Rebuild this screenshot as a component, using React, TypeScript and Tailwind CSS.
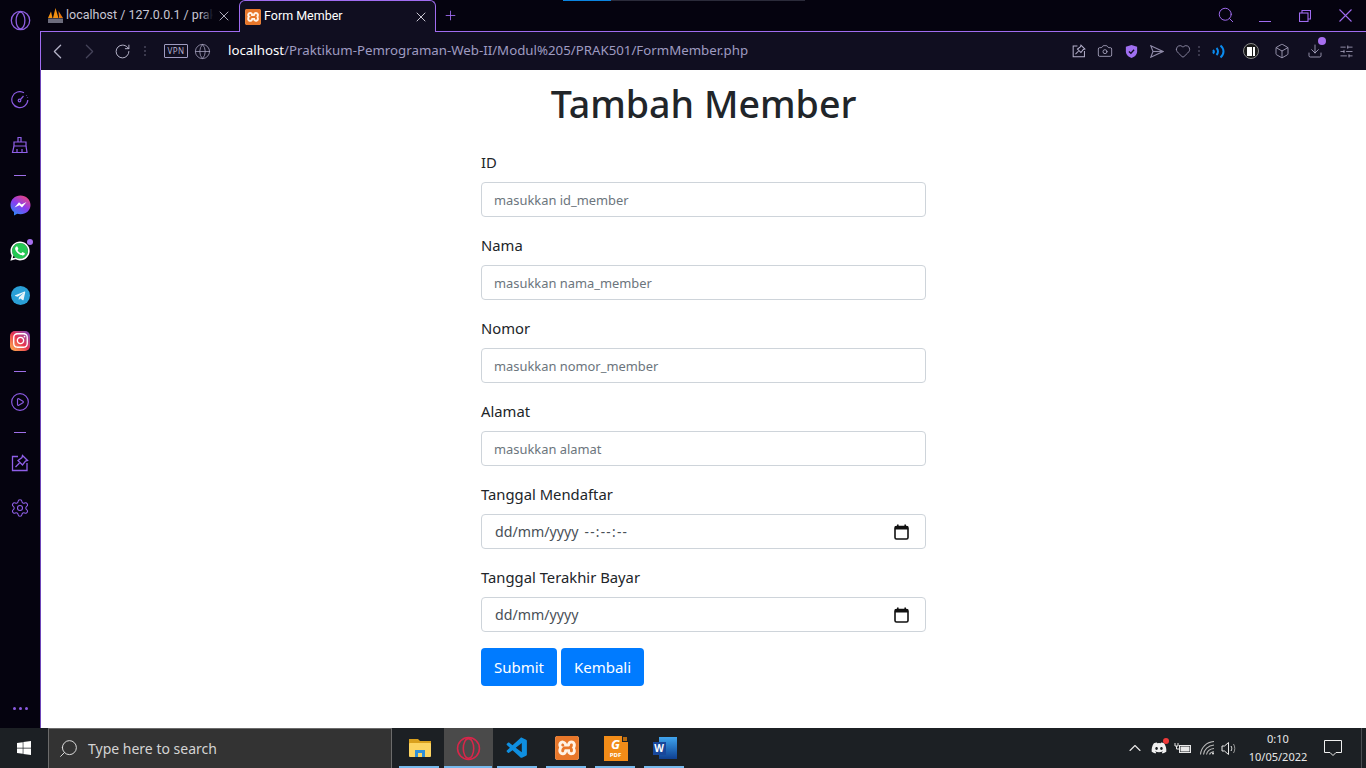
import type { ReactNode } from 'react'
import {
  ChevronLeft,
  ChevronRight,
  ChevronUp,
  RotateCw,
  Globe,
  CirclePlay,
  Settings,
  Search,
  X,
  Plus,
  Camera,
  Heart,
  Box,
  Download,
  SlidersHorizontal
} from 'lucide-react'
import { FaWhatsapp, FaTelegramPlane, FaInstagram, FaDiscord, FaWindows } from 'react-icons/fa'
import { SiXampp } from 'react-icons/si'
import { VscVscode } from 'react-icons/vsc'

const font = "font-['Noto_Sans','Open_Sans',sans-serif]"

const PinBox = ({ size, color }: { size: number; color: string }) => (
  <svg width={size} height={size} viewBox="0 0 18 18" fill="none" stroke={color} strokeWidth="1.3">
    <path d="M7 2.5H1.5V16.5H16V9" />
    <path d="M11.5 1.5L16.5 6.5L14.5 7L11.5 11L7 6.5L11 3.5Z" />
    <path d="M8.5 9L4.5 13" />
  </svg>
)

const OperaLogo = ({ size, color }: { size: number; color: string }) => (
  <svg width={size} height={size} viewBox="0 0 24 24" fill="none" stroke={color} strokeWidth="1.5">
    <circle cx="12" cy="12" r="10.5" />
    <ellipse cx="12" cy="12" rx="5" ry="9.5" />
  </svg>
)

const Dots = () => (
  <div className="flex flex-col gap-[2px]">
    <span className="w-[2px] h-[2px] bg-[#3a384c]" />
    <span className="w-[2px] h-[2px] bg-[#3a384c]" />
    <span className="w-[2px] h-[2px] bg-[#3a384c]" />
  </div>
)

const SideItem = ({ children }: { children: ReactNode }) => (
  <div className="h-[45px] flex items-center justify-center relative shrink-0">{children}</div>
)

const SideDivider = () => (
  <div className="h-[16px] flex items-center justify-center shrink-0">
    <div className="w-3 h-px bg-[#9f6fe8]" />
  </div>
)

const Sidebar = () => (
  <div className="w-[40px] shrink-0 bg-[#05030f] flex flex-col">
    <div className="h-[40px] pl-[1px] flex items-center justify-center shrink-0">
      <OperaLogo size={21} color="#8e5fe0" />
    </div>
    <div className="h-[37px] shrink-0" />
    <SideItem>
      <svg width="18" height="18" viewBox="0 0 18 18" fill="none" stroke="#8a5ae0" strokeWidth="1.2">
        <path d="M13 1.8A8 8 0 1 0 16.8 9" />
        <circle cx="8.5" cy="9.5" r="1.3" />
        <path d="M9.5 8.5L12.5 5" />
        <path d="M15.5 4.5V5M16.5 6.5V7" />
      </svg>
    </SideItem>
    <SideItem>
      <svg width="18" height="18" viewBox="0 0 18 18" fill="none" stroke="#8f5fe8" strokeWidth="1.2">
        <path d="M7 6V1.5H10V6" />
        <path d="M3 6H15V10H3Z" />
        <path d="M3 10L1.5 16.5H16L15 10" />
        <path d="M6 16V13M11 16V13" />
      </svg>
    </SideItem>
    <SideDivider />
    <SideItem>
      <svg width="21" height="21" viewBox="0 0 21 21">
        <defs>
          <linearGradient id="msgr" x1="0.8" y1="0" x2="0.2" y2="1">
            <stop offset="0" stopColor="#f0457a" />
            <stop offset="0.5" stopColor="#8a3cf0" />
            <stop offset="1" stopColor="#2a8cf8" />
          </linearGradient>
        </defs>
        <path d="M10.5 0.5C5 0.5 0.5 4.5 0.5 10C0.5 13 1.8 15.5 4 17V20.5L7.2 18.8C8.2 19.1 9.3 19.3 10.5 19.3C16 19.3 20.5 15.4 20.5 10C20.5 4.5 16 0.5 10.5 0.5Z" fill="url(#msgr)" />
        <path d="M4.5 12.5L9 7.2L11.5 9.5L16.5 7L12 12.5L9.5 10.2Z" fill="#ffffff" />
      </svg>
    </SideItem>
    <SideItem>
      <div className="w-[16px] h-[16px] rounded-full bg-[#25c853] flex items-center justify-center">
        <FaWhatsapp size={22} color="#ffffff" className="shrink-0" />
      </div>
      <div className="absolute top-[11px] right-[7px] w-[6px] h-[6px] rounded-full bg-[#a76ff0]" />
    </SideItem>
    <SideItem>
      <div className="w-[19px] h-[19px] rounded-full bg-[#2a9fd6] flex items-center justify-center">
        <FaTelegramPlane size={12} color="#e8f4fa" />
      </div>
    </SideItem>
    <SideItem>
      <div className="w-5 h-5 rounded-[5px] bg-gradient-to-tr from-[#fdb44b] via-[#e6304f] to-[#7a3cc0] flex items-center justify-center">
        <FaInstagram size={17} color="#ffffff" />
      </div>
    </SideItem>
    <SideDivider />
    <SideItem>
      <CirclePlay size={20} color="#8a5ae0" strokeWidth={1.4} />
    </SideItem>
    <SideDivider />
    <SideItem>
      <PinBox size={18} color="#8f5fe8" />
    </SideItem>
    <SideItem>
      <Settings size={20} color="#8f5fe8" strokeWidth={1.3} />
    </SideItem>
    <div className="mt-auto h-[21px] flex items-start justify-center gap-[3px]">
      <span className="w-[3px] h-[3px] rounded-full bg-[#8a5ae0]" />
      <span className="w-[3px] h-[3px] rounded-full bg-[#8a5ae0]" />
      <span className="w-[3px] h-[3px] rounded-full bg-[#8a5ae0]" />
    </div>
  </div>
)

const PmaIcon = () => (
  <svg width="17" height="17" viewBox="0 0 17 17" className="shrink-0">
    <path d="M1 11L4 4.5L5.5 11Z" fill="#f29111" />
    <path d="M6 11L8.5 1L11.5 11Z" fill="#f29111" />
    <path d="M12 11L11.5 4L16 11Z" fill="#e8770f" />
    <rect x="1" y="11.5" width="15" height="4.5" fill="#6c6c7c" />
  </svg>
)

// the Si glyph is a filled square with the logo cut out, so the light shows through it
const XamppIcon = ({ size }: { size: number }) => (
  <div className="bg-[#fff3e6] rounded-[3px] shrink-0" style={{ width: size, height: size }}>
    <SiXampp size={size} color="#e8772a" />
  </div>
)

const TabStrip = () => (
  <div className="h-[31px] flex items-stretch bg-[#05030f] relative shrink-0">
    <div className="absolute left-[523px] top-0 w-[48px] h-[1px] bg-[#0a84e0]" />
    <div className="absolute left-[571px] top-0 w-[194px] h-[1px] bg-[#2b2b3a]" />
    <div className="w-[199px] flex items-center pl-[7px] pr-[7px] shrink-0">
      <PmaIcon />
      <div className="ml-[2px] w-[147px] relative overflow-hidden">
        <span className="block whitespace-nowrap font-['Roboto',sans-serif] text-[12.5px] text-[#c8c6d4]">
          localhost / 127.0.0.1 / prak501
        </span>
        <div className="absolute right-0 top-0 bottom-0 w-[12px] bg-gradient-to-r from-transparent to-[#05030f]" />
      </div>
      <X size={16} color="#c8c6d4" className="ml-auto" strokeWidth={1.3} />
    </div>
    <div className="w-[197px] -mb-px z-10 flex items-center pl-[5px] pr-[6px] bg-[#100e20] border border-b-0 border-[#a06cf0] rounded-t-[6px] shrink-0">
      <XamppIcon size={16} />
      <span className="ml-[3px] font-['Roboto',sans-serif] text-[12.5px] text-white whitespace-nowrap">Form Member</span>
      <X size={16} color="#e8e6f0" className="ml-auto" strokeWidth={1.3} />
    </div>
    <div className="w-[28px] flex items-center justify-center">
      <Plus size={15} color="#a06cf0" strokeWidth={1.4} />
    </div>
    <div className="ml-auto flex items-center mr-[1px]">
      <div className="w-[38px] flex justify-center -mt-[2px]">
        <Search size={18} color="#a06cf0" strokeWidth={1.3} />
      </div>
      <div className="w-[40px] flex justify-center">
        <div className="w-3 h-px bg-[#a06cf0] mt-[11px]" />
      </div>
      <div className="w-[40px] flex justify-center">
        <svg width="12" height="12" viewBox="0 0 12 12" fill="none" stroke="#a06cf0" strokeWidth="1.1">
          <rect x="0.5" y="3" width="8.5" height="8.5" />
          <path d="M3 3V0.5H11.5V9H9" />
        </svg>
      </div>
      <div className="w-[40px] flex justify-center">
        <svg width="13" height="13" viewBox="0 0 13 13" fill="none" stroke="#a06cf0" strokeWidth="1.1">
          <path d="M0.5 0.5L12.5 12.5M12.5 0.5L0.5 12.5" />
        </svg>
      </div>
    </div>
  </div>
)

const BarSlot = ({ width, children }: { width: string; children: ReactNode }) => (
  <div className={`${width} flex items-center justify-center`}>{children}</div>
)

const AddressBar = () => (
  <div className="h-[39px] bg-[#100e20] border-t border-l border-[#a06cf0] flex items-center shrink-0">
    <ChevronLeft size={25} color="#b5b3c8" strokeWidth={1.2} className="ml-[4px]" />
    <ChevronRight size={25} color="#45435a" strokeWidth={1.2} className="ml-[7px]" />
    <RotateCw size={17} color="#b5b3c8" strokeWidth={1.4} className="ml-[12px]" />
    <div className="ml-[13px]">
      <Dots />
    </div>
    <div className="ml-[18px] w-[24px] h-[14px] border border-[#a09cc0] rounded-[1px] text-[8px] leading-[12px] tracking-[0.5px] text-center text-[#b5b1cc]">
      VPN
    </div>
    <Globe size={17} color="#a8a4c0" strokeWidth={1.1} className="ml-[6px]" />
    <div className="ml-[17px] -mt-[1px] text-[13.27px] whitespace-nowrap">
      <span className="text-white">localhost</span>
      <span className="text-[#9f9bc0]">/Praktikum-Pemrograman-Web-II/Modul%205/PRAK501/FormMember.php</span>
    </div>
    <div className="ml-auto mr-[4px] flex items-center">
      <BarSlot width="w-[26px]">
        <PinBox size={14} color="#b5b1cc" />
      </BarSlot>
      <BarSlot width="w-[26px]">
        <Camera size={16} color="#b5b1cc" strokeWidth={1.2} />
      </BarSlot>
      <BarSlot width="w-[26px]">
        <svg width="13" height="15" viewBox="0 0 15 16">
          <path d="M7.5 0.5L14 2.5V8C14 12 10.5 14.5 7.5 15.5C4.5 14.5 1 12 1 8V2.5Z" fill="#9f6ff0" />
          <path d="M4.5 8L6.8 10L10.5 6" fill="none" stroke="#100e20" strokeWidth="1.5" />
        </svg>
      </BarSlot>
      <BarSlot width="w-[26px]">
        <svg width="14" height="13" viewBox="0 0 14 13" fill="none" stroke="#8f8aa8" strokeWidth="1.1">
          <path d="M0.8 0.8L13 6.5L0.8 12.2L3 6.5Z" />
          <path d="M3 6.5H13" />
        </svg>
      </BarSlot>
      <BarSlot width="w-[26px]">
        <Heart size={16} color="#a09cb8" strokeWidth={1.2} />
      </BarSlot>
      <BarSlot width="w-[6px]">
        <Dots />
      </BarSlot>
      <BarSlot width="w-[34px]">
        <svg width="14" height="15" viewBox="0 0 14 14" fill="none" stroke="#0a8cf0" strokeWidth="2">
          <path d="M1 5.5C2 6.5 2 8 1 9" />
          <path d="M4.5 3.5C6.5 5.5 6.5 8.5 4.5 10.5" />
          <path d="M8.5 1C12.5 4.5 12.5 9.5 8.5 13" />
        </svg>
      </BarSlot>
      <BarSlot width="w-[30px]">
        <div className="w-4 h-4 rounded-full bg-[#1a1a1a] border border-[#8a8a8a] flex items-center justify-center">
          <span className="w-[5px] h-[9px] bg-white mr-[1px]" />
          <span className="w-[2px] h-[9px] bg-white" />
        </div>
      </BarSlot>
      <BarSlot width="w-[32px]">
        <Box size={16} color="#b5b1cc" strokeWidth={1.2} />
      </BarSlot>
      <BarSlot width="w-[32px]">
        <div className="relative ml-[1px]">
          <Download size={16} color="#b5b1cc" strokeWidth={1.2} />
          <span className="absolute -top-[6px] left-[11px] w-2 h-2 rounded-full bg-[#a76ff0]" />
        </div>
      </BarSlot>
      <BarSlot width="w-[32px]">
        <SlidersHorizontal size={15} color="#b5b1cc" strokeWidth={1.2} />
      </BarSlot>
    </div>
  </div>
)

const FieldLabel = ({ text }: { text: string }) => (
  <label className="block h-[24px] mb-[8px] leading-[24px] text-[14.8px] text-[#212529]">{text}</label>
)

const TextField = ({ label, placeholder }: { label: string; placeholder: string }) => (
  <div className="mb-[16px]">
    <FieldLabel text={label} />
    <input
      type="text"
      placeholder={placeholder}
      className="block w-full h-[35px] px-[12px] pt-[1px] text-[12.9px] bg-white border border-[#ced4da] rounded-[4px] outline-none placeholder:text-[#6c757d]"
    />
  </div>
)

const CalendarIcon = () => (
  <svg width="15" height="16" viewBox="0 0 15 16" fill="none">
    <rect x="1" y="2.5" width="13" height="12.5" rx="1.5" stroke="#111" strokeWidth="1.6" />
    <rect x="1" y="2.5" width="13" height="3" fill="#111" />
    <rect x="3" y="0.5" width="1.6" height="3" fill="#111" />
    <rect x="10.4" y="0.5" width="1.6" height="3" fill="#111" />
  </svg>
)

const DateField = ({ label, withTime }: { label: string; withTime?: boolean }) => (
  <div className="mb-[16px]">
    <FieldLabel text={label} />
    <div className="h-[35px] pl-[13px] pr-[16px] flex items-center justify-between bg-white border border-[#ced4da] rounded-[4px]">
      <div className="flex items-center pt-[1px] text-[#495057]">
        <span className="text-[14.2px]">dd/mm/yyyy</span>
        {withTime && <span className="ml-[6px] text-[13.5px] tracking-[1.3px]">--:--:--</span>}
      </div>
      <CalendarIcon />
    </div>
  </div>
)

const FormPage = () => (
  <div className="flex-1 bg-white border-l border-[#6d45b8] min-h-0 overflow-hidden">
    <h1 className="mt-[8px] mb-[20px] h-[52px] leading-[52px] text-center text-[37.6px] font-medium text-[#212529]">
      Tambah Member
    </h1>
    <form className="w-[445px] mx-auto">
      <TextField label="ID" placeholder="masukkan id_member" />
      <TextField label="Nama" placeholder="masukkan nama_member" />
      <TextField label="Nomor" placeholder="masukkan nomor_member" />
      <TextField label="Alamat" placeholder="masukkan alamat" />
      <DateField label="Tanggal Mendaftar" withTime />
      <DateField label="Tanggal Terakhir Bayar" />
      <div className="flex gap-[4px]">
        <button type="button" className="w-[76px] h-[38px] bg-[#007bff] text-white text-[15px] rounded-[4px]">
          Submit
        </button>
        <button type="button" className="w-[83px] h-[38px] bg-[#007bff] text-white text-[15px] rounded-[4px]">
          Kembali
        </button>
      </div>
    </form>
  </div>
)

const TaskSlot = ({ children, active }: { children: ReactNode; active?: boolean }) => (
  <div className={`w-[49px] h-full relative flex items-center justify-center ${active ? 'bg-[#4a4a4a]' : ''}`}>
    {children}
    <div className={`absolute bottom-0 h-[2px] bg-[#76b9ed] ${active ? 'left-0 right-[1px]' : 'left-[4px] right-[5px]'}`} />
  </div>
)

const Taskbar = () => (
  <div className="h-[40px] bg-[#1c2024] flex items-stretch shrink-0 text-white">
    <div className="w-[48px] flex items-center justify-center">
      <FaWindows size={16} color="#ffffff" />
    </div>
    <div className="w-[344px] bg-[#333333] border-t border-x border-[#6b6b6b] flex items-center pl-[9px]">
      <Search size={21} color="#e0e0e0" strokeWidth={1.1} className="-scale-x-100" />
      <span className="ml-[9px] text-[14px] text-[#d4d4d4]">Type here to search</span>
    </div>
    <div className="ml-[3px] flex items-stretch">
      <TaskSlot>
        <svg width="22" height="20" viewBox="0 0 22 20">
          <path d="M0 1H9L11 3H22V6H0Z" fill="#d9a01e" />
          <rect y="5" width="22" height="14" rx="1" fill="#fcd462" />
          <path d="M6 19V12H16V19H13V15H9V19Z" fill="#2f8fd8" />
        </svg>
      </TaskSlot>
      <TaskSlot active>
        <OperaLogo size={25} color="#d8264a" />
      </TaskSlot>
      <TaskSlot>
        <VscVscode size={25} color="#0f8fe0" />
      </TaskSlot>
      <TaskSlot>
        <XamppIcon size={24} />
      </TaskSlot>
      <TaskSlot>
        <div className="w-[24px] h-[25px] bg-[#f28c18] flex flex-col items-center justify-center leading-none font-bold relative">
          <div className="absolute top-0 right-0 w-[6px] h-[6px] bg-[#1c2024]" />
          <div className="absolute top-[1px] right-[1px] w-[4px] h-[4px] bg-[#b86a10]" />
          <span className="text-[13px] text-white italic">G</span>
          <span className="mt-[1px] text-[6px] text-white">PDF</span>
        </div>
      </TaskSlot>
      <TaskSlot>
        <div className="relative w-[24px] h-[22px]">
          <div className="absolute right-0 top-0 w-[18px] h-[22px] bg-gradient-to-b from-[#41a5ee] to-[#103f91]" />
          <div className="absolute left-0 top-[5px] w-[13px] h-[13px] bg-[#18479b] text-[10px] leading-[13px] font-bold text-center text-white">
            W
          </div>
        </div>
      </TaskSlot>
    </div>
    <div className="ml-auto flex items-center">
      <ChevronUp size={20} color="#e8e8e8" strokeWidth={1.3} />
      <div className="ml-[6px] relative">
        <FaDiscord size={16} color="#f0f0f0" />
        <span className="absolute -top-[2px] -right-[2px] w-[6px] h-[6px] rounded-full bg-[#f03a3a]" />
      </div>
      <svg width="17" height="12" viewBox="0 0 17 12" fill="none" stroke="#e8e8e8" className="ml-[7px]">
        <rect x="5.5" y="3.5" width="11" height="7" />
        <rect x="7" y="5" width="8" height="4" fill="#e8e8e8" />
        <path d="M1 1V4H4V1M2.5 4V7H5" />
      </svg>
      <svg width="15" height="14" viewBox="0 0 15 14" fill="none" stroke="#b8b8b8" strokeWidth="1.1" className="ml-[9px]">
        <path d="M0.5 13.5C1 6.5 6.5 1 14 0.5" />
        <path d="M3.5 13.5C4 8.5 8 4.5 14 4" />
        <path d="M6.5 13.5C7 10.5 9.5 8 14 7.5" />
        <path d="M9.5 13.5C10 12 11.5 11 14 10.8" />
        <circle cx="13" cy="12.5" r="1" fill="#e8e8e8" stroke="none" />
      </svg>
      <svg width="17" height="15" viewBox="0 0 17 15" fill="none" stroke="#e8e8e8" strokeWidth="1" className="ml-[6px]">
        <path d="M1 5H3.5L7.5 1.5V13.5L3.5 10H1Z" />
        <path d="M10 5C11 6.5 11 8.5 10 10" />
        <path d="M12.5 3C14.2 5.5 14.2 9.5 12.5 12" stroke="#999" />
      </svg>
      <div className="ml-[1px] w-[78px] text-center text-[11px] leading-[18px] text-[#e8e8e8]">
        <div>0:10</div>
        <div>10/05/2022</div>
      </div>
      <svg width="18" height="17" viewBox="0 0 18 17" fill="none" stroke="#f0f0f0" className="ml-[7px]">
        <path d="M0.5 0.5H17.5V12.5H12L9 15.5L6 12.5H0.5Z" />
      </svg>
      <div className="ml-[19px] w-px h-full bg-[#4a4e52] mr-[4px]" />
    </div>
  </div>
)

const App = () => (
  <div className={`w-[1366px] h-[768px] overflow-hidden flex flex-col ${font}`}>
    <div className="flex-1 flex min-h-0">
      <Sidebar />
      <div className="flex-1 flex flex-col min-w-0">
        <TabStrip />
        <AddressBar />
        <FormPage />
      </div>
    </div>
    <Taskbar />
  </div>
)

export default App
